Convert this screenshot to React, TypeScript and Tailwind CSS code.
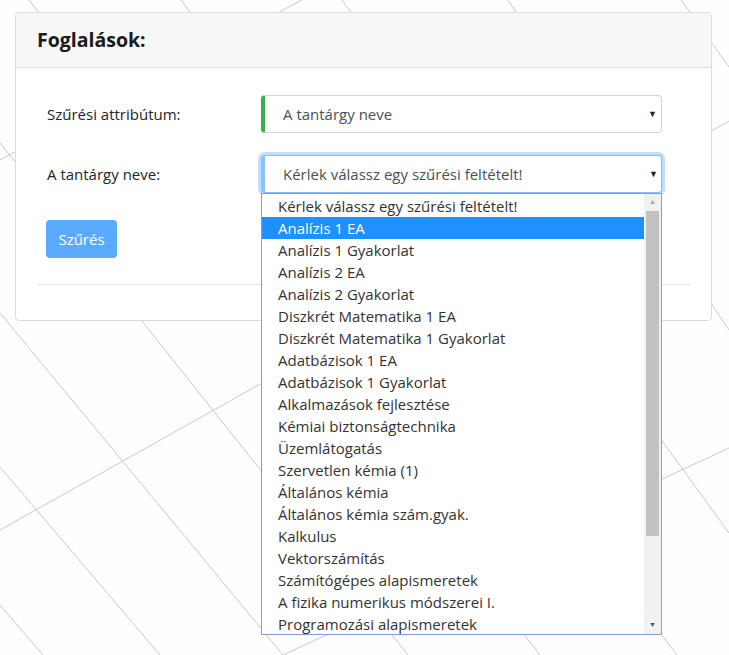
import React from "react";

const subjects = [
  "Kérlek válassz egy szűrési feltételt!",
  "Analízis 1 EA",
  "Analízis 1 Gyakorlat",
  "Analízis 2 EA",
  "Analízis 2 Gyakorlat",
  "Diszkrét Matematika 1 EA",
  "Diszkrét Matematika 1 Gyakorlat",
  "Adatbázisok 1 EA",
  "Adatbázisok 1 Gyakorlat",
  "Alkalmazások fejlesztése",
  "Kémiai biztonságtechnika",
  "Üzemlátogatás",
  "Szervetlen kémia (1)",
  "Általános kémia",
  "Általános kémia szám.gyak.",
  "Kalkulus",
  "Vektorszámítás",
  "Számítógépes alapismeretek",
  "A fizika numerikus módszerei I.",
  "Programozási alapismeretek",
];

// background grid lines [x1, y1, x2, y2]
const lines: number[][] = [
  [29, 0, 540, 655],
  [181, 0, 677, 655],
  [342, 0, 729, 533],
  [508, 0, 729, 330],
  [681, 0, 729, 67],
  [0, 143, 408, 655],
  [0, 313, 283, 655],
  [0, 467, 160, 655],
  [0, 605, 43, 655],
  [0, 160, 302, 0],
  [0, 530, 729, 121],
  [283, 655, 729, 448],
];

function Arrow() {
  return <span className="absolute right-[4px] top-1/2 -translate-y-1/2 text-[9px] text-[#222]">▼</span>;
}

export default function App() {
  return (
    <div
      className="relative w-[729px] h-[655px] overflow-hidden bg-[#fefefe] text-[#212529]"
      style={{ fontFamily: "'Open Sans', 'Noto Sans', sans-serif" }}
    >
      <svg className="absolute inset-0" width="729" height="655">
        {lines.map((l, i) => (
          <line key={i} x1={l[0]} y1={l[1]} x2={l[2]} y2={l[3]} stroke="#c9c9c9" strokeWidth="1" />
        ))}
      </svg>

      <div className="relative ml-[15px] mt-[12px] w-[697px] h-[309px] bg-white border border-[#dcdcdc] rounded-[4px]">
        <div className="h-[55px] bg-[#f7f7f7] border-b border-[#dcdcdc] rounded-t-[4px] flex items-center pl-[21px]">
          <h3 className="text-[19.5px] font-bold text-[#1a1a1a]">Foglalások:</h3>
        </div>

        <div className="px-[20px]">
          <div className="pl-[11px] pt-[27px]">
            <div className="flex items-center h-[38px]">
              <label className="w-[214px] text-[15px]">Szűrési attribútum:</label>
              <div className="relative w-[401px] h-[38px] border border-[#ced4da] border-l-4 border-l-[#3fae49] rounded-[4px] flex items-center pl-[18px] text-[15px] text-[#495057]">
                A tantárgy neve
                <Arrow />
              </div>
            </div>

            <div className="flex items-center h-[38px] mt-[22px]">
              <label className="w-[214px] text-[15px]">A tantárgy neve:</label>
              <div className="relative w-[401px] h-[38px]">
                <div className="h-full border border-[#80bdff] border-l-4 border-l-[#8cc2ff] rounded-[4px] shadow-[0_0_0_3px_rgba(0,123,255,0.25)] flex items-center pl-[18px] text-[15px] text-[#495057]">
                  Kérlek válassz egy szűrési feltételt!
                  <Arrow />
                </div>

                <div className="absolute left-0 top-[38px] z-10 w-[401px] h-[442px] bg-white border border-[#7f9ed6] flex">
                  <div className="flex-1 pt-[1px]">
                    {subjects.map((s, i) => (
                      <div
                        key={s}
                        className={
                          "h-[22px] flex items-center pl-[16px] text-[15px] whitespace-nowrap " +
                          (i === 1 ? "bg-[#1e90ff] text-white" : "text-[#333]")
                        }
                      >
                        {s}
                      </div>
                    ))}
                  </div>
                  <div className="w-[17px] bg-[#f1f1f1] flex flex-col items-center">
                    <div className="h-[17px] flex items-center justify-center text-[7px] text-[#a3a3a3]">▲</div>
                    <div className="w-[13px] h-[325px] bg-[#c1c1c1]" />
                    <div className="flex-1" />
                    <div className="h-[17px] flex items-center justify-center text-[7px] text-[#505050]">▼</div>
                  </div>
                </div>
              </div>
            </div>

            <button className="-ml-[1px] mt-[27px] h-[38px] w-[71px] rounded-[4px] bg-[#5aabff] text-white text-[15px]">
              Szűrés
            </button>
          </div>

          <div className="mt-[26px] border-t border-[#e3e3e3] ml-[1px]" />
        </div>
      </div>
    </div>
  );
}
